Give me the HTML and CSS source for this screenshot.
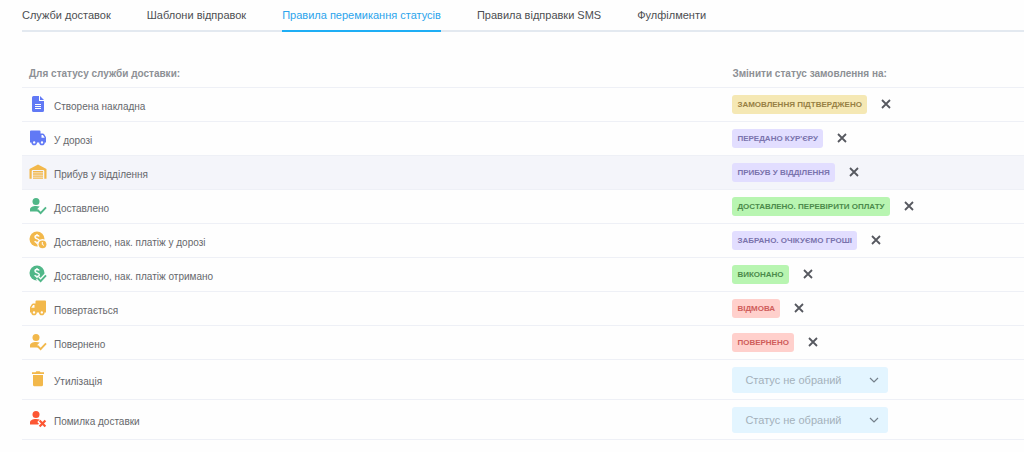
FILE: index.html
```html
<!DOCTYPE html>
<html lang="uk">
<head>
<meta charset="utf-8">
<meta name="viewport" content="width=device-width, initial-scale=1">
<title>Правила перемикання статусів</title>
<link rel="stylesheet" href="styles.css">
</head>
<body>
<svg class="sprite" aria-hidden="true">
  <symbol id="i-file" viewBox="0 0 18 18"><path fill="currentColor" d="M4.500 1H10v5h5v9.500a1.500 1.500 0 0 1-1.500 1.500h-9A1.500 1.500 0 0 1 3 15.500v-13A1.500 1.500 0 0 1 4.500 1zM11 1l4 4h-4z"/><path fill="none" stroke="#fefefe" d="M6 9.500h6M6 11.500h6M6 13.500h6"/></symbol>
  <symbol id="i-truck" viewBox="0 0 18 18"><path fill="currentColor" fill-rule="evenodd" d="M2 1.500h8.500a1 1 0 0 1 1 1V4.500h2.300a1.500 1.500 0 0 1 1.200.6l1.700 2.600a2 2 0 0 1 .3 1v4.800H1v-11a1 1 0 0 1 1-1zM12.500 6v2.700h3.200L13.900 6z"/><circle class="wheel" cx="5.200" cy="13.400" r="2"/><circle class="wheel" cx="13" cy="13.400" r="2"/></symbol>
  <symbol id="i-warehouse" viewBox="0 0 18 18"><path fill="currentColor" d="M.5 6 9 1.500 17.500 6v9.700h-2.200V8a1 1 0 0 0-1-1H3.700a1 1 0 0 0-1 1v7.700H.5zM4 8h10v1.500H4zm0 2.200h10v1.500H4zm0 2.200h10v1.400H4zm0 2.100h10v1.300H4z"/></symbol>
  <symbol id="i-person" viewBox="0 0 18 18"><circle cx="7" cy="4.500" r="3.500" fill="currentColor"/><path fill="currentColor" d="M7 9c1.400 0 2.700.2 3.700.6L8.300 12l2.300 2.500H1v-1.900C1 10.400 3.600 9 7 9z"/></symbol>
  <symbol id="i-person-check" viewBox="0 0 18 18"><use href="#i-person"/><path class="line" d="m8.600 13 3 3.100 5.400-5.800"/></symbol>
  <symbol id="i-person-x" viewBox="0 0 18 18"><use href="#i-person"/><path class="halo" d="m10.600 10.500 5.800 5.900m0-5.900-5.800 5.900"/><path class="line line-bold" d="m10.600 10.500 5.800 5.900m0-5.900-5.800 5.900"/></symbol>
  <symbol id="i-dollar" viewBox="0 0 18 18"><circle cx="8" cy="8" r="7.500" fill="currentColor"/><path class="cut" d="M10.200 5.500C9.700 4.600 8.900 4.500 8 4.500c-1.200 0-2 .6-2 1.500 0 2.300 4.300 1.400 4.300 3.800 0 1-.9 1.600-2.200 1.600-1 0-1.900-.3-2.400-1.200M8 2.900v1.600m0 6.900V13"/></symbol>
  <symbol id="i-dollar-check" viewBox="0 0 18 18"><use href="#i-dollar"/><path class="halo" d="m8.600 13 3 3.100 5.400-5.800"/><path class="line" d="m8.600 13 3 3.100 5.400-5.800"/></symbol>
  <symbol id="i-dollar-clock" viewBox="0 0 18 18"><use href="#i-dollar"/><circle cx="13.500" cy="13.300" r="5.200" fill="#fefefe"/><circle cx="13.500" cy="13.300" r="3.900" fill="currentColor"/><path fill="none" stroke="#fefefe" d="M13.300 11v2.500l1.700.9"/></symbol>
  <symbol id="i-trash" viewBox="0 0 18 18"><path fill="currentColor" d="M3 2.300h3.500L7.300 1.300h3.400l.8 1H15v1.700H3zM4 5h10v9.700a1.500 1.500 0 0 1-1.500 1.500h-7A1.500 1.500 0 0 1 4 14.700z"/></symbol>
  <symbol id="i-close" viewBox="0 0 10 10"><path fill="none" stroke="currentColor" stroke-width="1.800" d="m1 1 8 8m0-8-8 8"/></symbol>
  <symbol id="i-chevron" viewBox="0 0 10 6"><path fill="none" stroke="currentColor" stroke-width="1.200" d="m1 1 4 4 4-4"/></symbol>
</svg>

<main class="page">
  <nav class="tabs" aria-label="Налаштування доставки">
    <a class="tab" href="#services">Служби доставок</a>
    <a class="tab" href="#templates">Шаблони відправок</a>
    <a class="tab tab-active" href="#rules" aria-current="page">Правила перемикання статусів</a>
    <a class="tab" href="#sms">Правила відправки SMS</a>
    <a class="tab" href="#fulfilment">Фулфілменти</a>
  </nav>

  <table class="rules">
    <thead>
      <tr><th class="col-source" scope="col">Для статусу служби доставки:</th><th scope="col">Змінити статус замовлення на:</th></tr>
    </thead>
    <tbody>
      <tr>
        <td><div class="source"><svg class="icon blue"><use href="#i-file"/></svg><span>Створена накладна</span></div></td>
        <td><div class="target"><span class="badge badge-yellow">Замовлення підтверджено</span><button class="remove" type="button" aria-label="Видалити"><svg class="x"><use href="#i-close"/></svg></button></div></td>
      </tr>
      <tr>
        <td><div class="source"><svg class="icon blue"><use href="#i-truck"/></svg><span>У дорозі</span></div></td>
        <td><div class="target"><span class="badge badge-violet">Передано кур'єру</span><button class="remove" type="button" aria-label="Видалити"><svg class="x"><use href="#i-close"/></svg></button></div></td>
      </tr>
      <tr class="row-hover">
        <td><div class="source"><svg class="icon amber"><use href="#i-warehouse"/></svg><span>Прибув у відділення</span></div></td>
        <td><div class="target"><span class="badge badge-violet">Прибув у відділення</span><button class="remove" type="button" aria-label="Видалити"><svg class="x"><use href="#i-close"/></svg></button></div></td>
      </tr>
      <tr>
        <td><div class="source"><svg class="icon green"><use href="#i-person-check"/></svg><span>Доставлено</span></div></td>
        <td><div class="target"><span class="badge badge-green">Доставлено. Перевірити оплату</span><button class="remove" type="button" aria-label="Видалити"><svg class="x"><use href="#i-close"/></svg></button></div></td>
      </tr>
      <tr>
        <td><div class="source"><svg class="icon amber"><use href="#i-dollar-clock"/></svg><span>Доставлено, нак. платіж у дорозі</span></div></td>
        <td><div class="target"><span class="badge badge-violet">Забрано. Очікуємо гроші</span><button class="remove" type="button" aria-label="Видалити"><svg class="x"><use href="#i-close"/></svg></button></div></td>
      </tr>
      <tr>
        <td><div class="source"><svg class="icon green"><use href="#i-dollar-check"/></svg><span>Доставлено, нак. платіж отримано</span></div></td>
        <td><div class="target"><span class="badge badge-green">Виконано</span><button class="remove" type="button" aria-label="Видалити"><svg class="x"><use href="#i-close"/></svg></button></div></td>
      </tr>
      <tr>
        <td><div class="source"><svg class="icon amber flipped"><use href="#i-truck"/></svg><span>Повертається</span></div></td>
        <td><div class="target"><span class="badge badge-red">Відмова</span><button class="remove" type="button" aria-label="Видалити"><svg class="x"><use href="#i-close"/></svg></button></div></td>
      </tr>
      <tr>
        <td><div class="source"><svg class="icon amber"><use href="#i-person-check"/></svg><span>Повернено</span></div></td>
        <td><div class="target"><span class="badge badge-red">Повернено</span><button class="remove" type="button" aria-label="Видалити"><svg class="x"><use href="#i-close"/></svg></button></div></td>
      </tr>
      <tr>
        <td><div class="source"><svg class="icon amber"><use href="#i-trash"/></svg><label for="s-disposal">Утилізація</label></div></td>
        <td><div class="picker"><select id="s-disposal" class="select"><option>Статус не обраний</option></select><svg class="chevron"><use href="#i-chevron"/></svg></div></td>
      </tr>
      <tr>
        <td><div class="source"><svg class="icon red"><use href="#i-person-x"/></svg><label for="s-error">Помилка доставки</label></div></td>
        <td><div class="picker"><select id="s-error" class="select"><option>Статус не обраний</option></select><svg class="chevron"><use href="#i-chevron"/></svg></div></td>
      </tr>
    </tbody>
  </table>
</main>
</body>
</html>
```
FILE: styles.css
```css
* { box-sizing: border-box; }
body {
  margin: 0;
  background: #fefefe;
  color: #66686c;
  font-family: "Liberation Sans", Arial, sans-serif;
  font-size: 10px;
  line-height: 12px;
}
.sprite { position: absolute; width: 0; height: 0; }
.page { padding-left: 22px; }

.tabs {
  display: flex;
  gap: 36px;
  border-bottom: 2px solid #e3e9f0;
}
.tab {
  margin-bottom: -2px;
  padding: 8px 0 7px;
  border-bottom: 2px solid transparent;
  color: #4c4e52;
  font-size: 11px;
  line-height: 15px;
  text-decoration: none;
  white-space: nowrap;
}
.tab-active { color: #2ba4ec; border-color: #1eaef5; }

.rules {
  width: 100%;
  margin-top: 28px;
  border-collapse: separate;
  border-spacing: 0;
  table-layout: fixed;
}
.col-source { width: 70.9%; }
.rules th {
  padding: 8px 0 7px;
  border-bottom: 1px solid #eef0f6;
  color: #8d9095;
  text-align: left;
}
.rules th:first-child, .rules td:first-child { padding-left: 7px; }
.rules td {
  height: 34px;
  padding: 0 0 1px;
  border-bottom: 1px solid #eef0f6;
  vertical-align: middle;
}
.row-hover { background: #f4f5fa; }

.source { display: flex; align-items: flex-end; gap: 7px; }
.icon { width: 18px; height: 18px; flex: none; }
.flipped { transform: scaleX(-1); }
.blue { color: #6179f5; }
.amber { color: #f2b84b; }
.green { color: #50b788; }
.red { color: #fc5633; }
.line { fill: none; stroke: currentColor; stroke-width: 1.9; }
.line-bold { stroke-width: 2.2; }
.halo { fill: none; stroke: #fefefe; stroke-width: 4.4; }
.cut { fill: none; stroke: #fefefe; stroke-width: 1.4; }
.wheel { fill: #fefefe; stroke: currentColor; stroke-width: 1.6; }

.target { display: flex; align-items: center; gap: 14px; }
.badge {
  padding: 3px 5px;
  border-radius: 3px;
  font-size: 8px;
  font-weight: bold;
  line-height: 13px;
  text-transform: uppercase;
  white-space: nowrap;
}
.badge-yellow { background: #f5e8b4; color: #978044; }
.badge-violet { background: #e2deff; color: #7a73ad; }
.badge-green { background: #b8f5b1; color: #4b8a4b; }
.badge-red { background: #ffd0cc; color: #cf5d5b; }
.remove {
  display: flex;
  padding: 0;
  border: 0;
  background: none;
  color: #56585f;
  cursor: pointer;
}
.x { width: 10px; height: 10px; }

.picker { position: relative; width: 156px; margin: 7px 0 5px; }
.select {
  display: block;
  width: 100%;
  height: 26px;
  padding: 0 28px 0 13px;
  border: 0;
  border-radius: 3px;
  appearance: none;
  background: #e3f5ff;
  color: #a3b1bb;
  font: 11px/14px "Liberation Sans", Arial, sans-serif;
}
.chevron {
  position: absolute;
  top: 10px;
  right: 9px;
  width: 10px;
  height: 6px;
  color: #75818b;
  pointer-events: none;
}
```
